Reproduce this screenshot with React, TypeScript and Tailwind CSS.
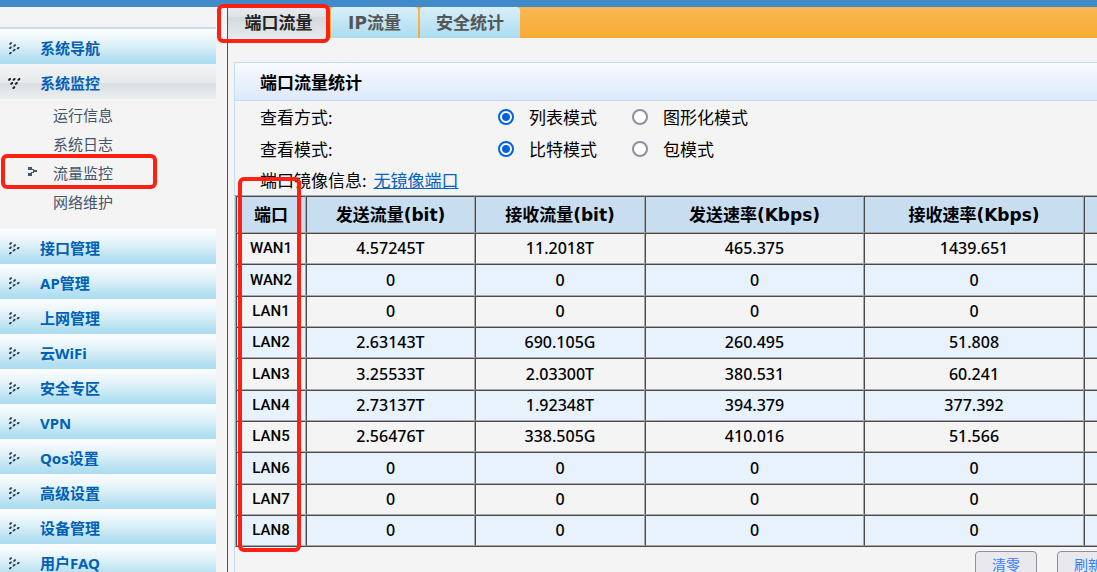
import React, { useState } from 'react';

const topMenu = ['系统导航'];
const monitorItems = ['运行信息', '系统日志', '流量监控', '网络维护'];
const lowerMenu = ['接口管理', 'AP管理', '上网管理', '云WiFi', '安全专区', 'VPN', 'Qos设置', '高级设置', '设备管理', '用户FAQ'];

const rows = [
  ['WAN1', '4.57245T', '11.2018T', '465.375', '1439.651'],
  ['WAN2', '0', '0', '0', '0'],
  ['LAN1', '0', '0', '0', '0'],
  ['LAN2', '2.63143T', '690.105G', '260.495', '51.808'],
  ['LAN3', '3.25533T', '2.03300T', '380.531', '60.241'],
  ['LAN4', '2.73137T', '1.92348T', '394.379', '377.392'],
  ['LAN5', '2.56476T', '338.505G', '410.016', '51.566'],
  ['LAN6', '0', '0', '0', '0'],
  ['LAN7', '0', '0', '0', '0'],
  ['LAN8', '0', '0', '0', '0'],
];

const cellBorder = 'border border-t-[#4a4a4a] border-l-[#4a4a4a] border-r-[#a9a9a9] border-b-[#a9a9a9] p-0';

function DotsRight() {
  return (
    <svg className="h-4 w-4" viewBox="0 0 16 16" fill="#2f2f4f">
      {[[3.6, 3.4], [7.6, 5.4], [3.4, 7.6], [11.2, 8], [7.2, 10], [3.4, 13]].map(([x, y]) => (
        <path key={`${x}-${y}`} d={`M${x} ${y - 1.1}h1.3v1.2l-1.2 1.2h-1.4v-1.2z`} />
      ))}
      <path d="M5.6 7.6h1v1h-1zM5.6 11h1v1h-1z" opacity=".45" />
    </svg>
  );
}

function DotsDown() {
  return (
    <svg className="h-4 w-4" viewBox="0 0 16 16" fill="#222">
      {[[2.4, 4.2], [7, 4.2], [11.8, 4.2], [4.6, 8.2], [9.2, 8.2], [6.8, 12.4]].map(([x, y]) => (
        <path key={`${x}-${y}`} d={`M${x} ${y - 1.1}h1.4v1.3l-1.2 1.3h-1.5v-1.3z`} />
      ))}
    </svg>
  );
}

function MenuLink({ label, open = false }: { label: string; open?: boolean }) {
  return (
    <a
      href="#"
      className={`flex h-[35px] items-center pt-[2px] pl-[7px] text-[15px] font-bold text-[#0060b6] ${
        open
          ? 'bg-[linear-gradient(#f3f4f5_0%,#e6eaec_54%,#d9dee2_55%,#eceff0_100%)]'
          : 'bg-[linear-gradient(#fdfeff_0%,#ebf6fb_30%,#cfebf5_60%,#b4e0f2_85%,#abddf1_100%)]'
      }`}
    >
      {open ? <DotsDown /> : <DotsRight />}
      <span className="ml-[17px] pt-px">{label}</span>
    </a>
  );
}

function Choice({ name, label, checked, onChange }: { name: string; label: string; checked: boolean; onChange: () => void }) {
  return (
    <label className="flex items-center gap-[15px]">
      <input
        type="radio"
        name={name}
        checked={checked}
        onChange={onChange}
        className="h-4 w-4 appearance-none rounded-full border-2 border-[#8f8f9d] bg-white checked:border-[#0060df] checked:bg-[radial-gradient(circle,#0060df_3.5px,#fff_4.5px)]"
      />
      <span className="pt-[2px]">{label}</span>
    </label>
  );
}

function ChoiceRow({ title, name, options }: { title: string; name: string; options: string[] }) {
  const [value, setValue] = useState(0);
  return (
    <div className="grid h-8 grid-cols-[238px_134px_1fr] items-center pl-[25px]" role="radiogroup" aria-label={title}>
      <span className="pt-[2px]">{title}:</span>
      {options.map((o, i) => (
        <Choice key={o} name={name} label={o} checked={value === i} onChange={() => setValue(i)} />
      ))}
    </div>
  );
}

export default function App() {
  return (
    <div className="relative flex h-screen flex-col overflow-hidden bg-[#f4f4f4] font-['Noto_Sans','Noto_Sans_CJK_SC',sans-serif] text-black">
      <header className="h-[7px] shrink-0 bg-[#428bca]" />
      <div className="flex min-h-0 flex-1">
        <nav className="mt-5 w-[216px] shrink-0 border-t-2 border-[#c9dcef]">
          {topMenu.map((m) => (
            <MenuLink key={m} label={m} />
          ))}
          <MenuLink label="系统监控" open />
          <ul className="pb-[14px] text-[15px] text-[#44546a]">
            {monitorItems.map((m) => (
              <li key={m}>
                <a href="#" className="flex h-[29px] items-center pt-1">
                  <span className="flex w-[53px] justify-center pl-[11px]">
                    {m === '流量监控' && (
                      <svg className="mb-1 h-[9px] w-[9px]" viewBox="0 0 9 9" fill="#44546a">
                        <path d="M0 0h4v2h2v1h3v2H6v1H4v3H0V6h3V5h2V3H0z" />
                      </svg>
                    )}
                  </span>
                  {m}
                </a>
              </li>
            ))}
          </ul>
          {lowerMenu.map((m) => (
            <MenuLink key={m} label={m} />
          ))}
        </nav>

        <main className="ml-[11px] min-w-0 flex-1 border-l border-[#0062c4]">
          <div className="flex h-[31px] gap-[2px] bg-linear-to-b from-[#f9b752] to-[#f8ab33] font-['DejaVu_Sans','Noto_Sans_CJK_SC',sans-serif] text-[17px] font-bold text-[#555]">
            <button className="w-[101px] bg-[linear-gradient(#e8ebed_0%,#e1e5e8_30%,#d5d9dd_32%,#e6e9eb_100%)] pt-[2px] text-[#222]">端口流量</button>
            <button className="w-[87px] rounded-t-sm bg-linear-to-b from-[#d8eff9] to-[#abdcf0] pt-[2px]">IP流量</button>
            <button className="w-[100px] rounded-t-sm bg-linear-to-b from-[#d8eff9] to-[#abdcf0] pt-[2px]">安全统计</button>
          </div>

          <section className="mt-6 ml-[6px] border-t border-l border-[#c5dcf2] text-[17px]">
            <h1 className="flex h-[38px] items-center border-b border-[#c5dcf2] bg-linear-to-b from-[#f8faff] to-[#dce9fb] pt-[3px] pl-[25px] font-bold">端口流量统计</h1>
            <ChoiceRow title="查看方式" name="view" options={['列表模式', '图形化模式']} />
            <ChoiceRow title="查看模式" name="unit" options={['比特模式', '包模式']} />
            <div className="flex h-[30px] items-center gap-[7px] pt-px pl-[25px]">
              <span>端口镜像信息:</span>
              <a href="#" className="text-[#0563c1] underline">无镜像端口</a>
            </div>
            <table className="w-full min-w-[1069px] table-fixed border-separate border-spacing-0 border border-t-[#a9a9a9] border-r-[#4a4a4a] border-b-[#4a4a4a] border-l-[#a9a9a9] text-center text-[16px] leading-5">
              <colgroup>
                <col className="w-[70px]" />
                <col className="w-[169px]" />
                <col className="w-[170px]" />
                <col className="w-[219px]" />
                <col className="w-[220px]" />
                <col />
              </colgroup>
              <thead className="bg-[#c8ddf0] font-['DejaVu_Sans','Noto_Sans_CJK_SC',sans-serif] text-[17px]">
                <tr className="h-[37px]">
                  {['端口', '发送流量(bit)', '接收流量(bit)', '发送速率(Kbps)', '接收速率(Kbps)', ''].map((h) => (
                    <th key={h} scope="col" className={`${cellBorder} font-bold`}>{h}</th>
                  ))}
                </tr>
              </thead>
              <tbody>
                {rows.map((r) => (
                  <tr key={r[0]} className="h-[31px] even:bg-[#e7f2fd] nth-[3n+2]:h-8">
                    {r.map((c, i) => (
                      <td key={i} className={`${cellBorder} pb-px font-medium ${i === 0 ? "font-['Roboto',sans-serif] text-[15px]" : ''}`}>{c}</td>
                    ))}
                    <td className={cellBorder} />
                  </tr>
                ))}
              </tbody>
            </table>
            <div className="mt-1 flex gap-5 pl-[740px] text-[14px] text-[#3380ff]">
              <button className="h-[26px] w-[62px] shrink-0 rounded border border-[#8f8f9d] bg-[#e9e9ed]">清零</button>
              <button className="h-[26px] w-[62px] shrink-0 rounded border border-[#8f8f9d] bg-[#e9e9ed]">刷新</button>
            </div>
          </section>
        </main>
      </div>

      <div className="pointer-events-none absolute top-[4px] left-[217px] h-[39px] w-[113px] rounded-md border-4 border-[#ff2014]" />
      <div className="pointer-events-none absolute top-[154px] left-[1px] h-[35px] w-[156px] rounded-md border-4 border-[#ff2014]" />
      <div className="pointer-events-none absolute top-[177px] left-[238px] h-[375px] w-[63px] rounded-md border-4 border-[#ff2014]" />
    </div>
  );
}
